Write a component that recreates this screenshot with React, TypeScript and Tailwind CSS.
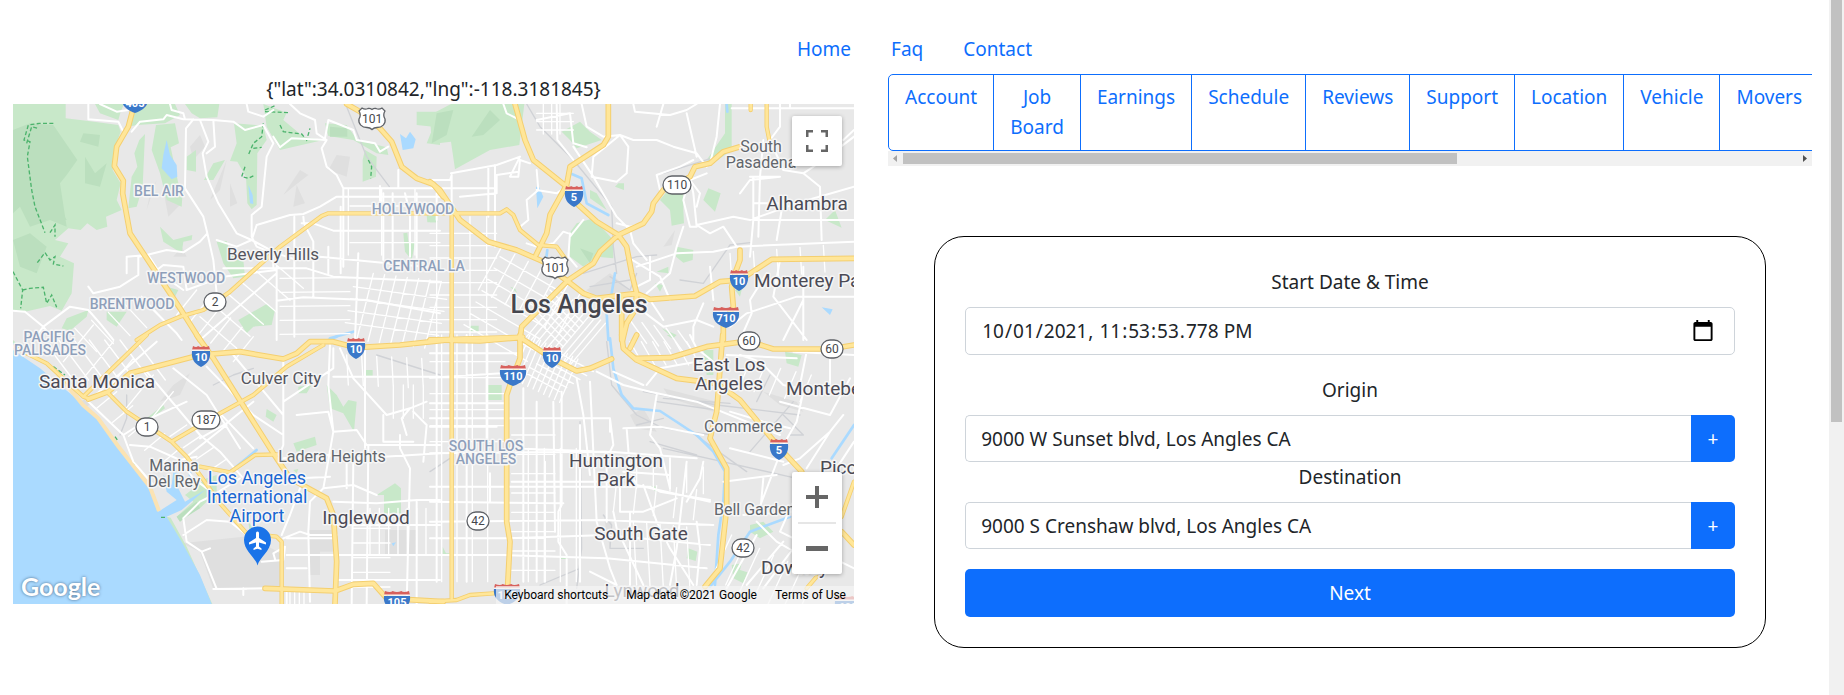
import { useState } from "react";
import type { ReactNode } from "react";

/* ---------- map geometry: four tiles, each drawn in its own 3x units ---------- */

/** n parallel strokes starting at (x, y), stepping by (sx, sy), each running along (lx, ly). */
function hatch(x: number, y: number, sx: number, sy: number, lx: number, ly: number, n: number): string {
  return Array.from({ length: n }, (_, i) => `M${x + sx * i},${y + sy * i}l${lx},${ly}`).join("");
}

interface Tile {
  at: string;
  ocean: string;
  shade: string;
  parks: string;
  deep: string;
  trails: string;
  lakes: string;
  rivers: string;
  rails: string;
  streets: string;
  fine: string;
  roads: string;
  freeways: string;
}

const tiles: Tile[] = [
  {
    at: "translate(0 60) scale(0.33333)",
    ocean: "",
    shade:
      "M850,405L900,330L925,345L880,380ZM985,330L1010,285L1050,290L1040,350ZM880,440L890,375L915,430ZM630,420L680,300L660,390ZM690,370L712,430L690,440ZM440,450L470,360L450,400ZM505,470L490,390L545,430ZM570,260L600,225L615,260L580,300ZM520,590L545,560L560,590Z",
    parks:
      "M39,132H197V175L265,183L355,195L362,215L345,262L338,330L362,370L350,420L365,450L318,470L322,500L290,510L262,490L242,510L205,505L165,540L205,550L180,590L222,610L215,700L185,752L150,738L75,755L39,752ZM265,132H285L300,160L355,180L362,155L372,132H350ZM385,200L405,132H525L540,165L495,190L410,195ZM418,240L435,222L428,380L410,440L385,445L395,350L412,320L403,280ZM468,195L525,190L537,250L512,262L535,370L548,395L545,440L500,420L480,340L455,270ZM555,132H658L652,172L600,175L575,160ZM702,190L790,197L800,240L772,280L770,435L755,448L742,430L738,350L712,305L690,303L710,250ZM790,132L860,158L850,180L910,230L970,240L840,270L800,200ZM975,190L1040,195L1072,240L1160,262L1165,285L1130,280L1060,240L985,228ZM1095,270L1130,290L1128,350L1088,365V300ZM1250,155H1320V255L1280,250L1300,200L1250,195ZM560,290L588,270V335L560,330ZM640,310L675,300L640,360L612,360ZM480,500L520,540L577,525L575,540L550,545L545,580L490,545ZM650,545L680,543L690,580L730,600L735,650L700,655L670,610ZM715,780L800,732L825,750L815,795L760,800L740,820ZM200,775L265,750L260,770L210,812L185,805ZM320,755L380,755L350,800L320,780ZM1210,520L1222,518L1225,545L1245,550L1235,600L1215,575ZM1280,465H1312V487H1282ZM500,680L535,690L520,720Z",
    deep:
      "M39,210L90,190L160,195L232,300L200,345L180,370L200,500L150,480L90,500L60,440L39,460ZM110,390L150,360L170,420L200,480L140,470ZM250,220L300,225L295,260L240,245ZM39,540L90,520L140,560L110,640L60,620ZM990,200L1042,205V230H990ZM255,290L285,340L320,310L300,380L255,370Z",
    trails:
      "M160,190H118L85,195L72,240L90,245L82,290L95,390L105,440L135,518M150,518L165,495V530M80,250L95,200L115,205M112,608L135,578L150,600L165,590L160,612L190,618M39,635L68,690L62,745M68,690L90,685L130,682L140,730L155,705L170,742M795,150L830,135M795,155L868,158M790,190L785,230L760,250L745,285M760,265L785,262M840,195L850,215L905,222L920,240L930,205M735,320L725,350L745,355L765,345M1105,300L1115,320L1112,355",
    lakes:
      "M500,240L510,285L530,315L532,350L515,358L485,325L490,285ZM745,375L758,405L760,432L750,430ZM1200,222L1218,235L1230,215L1247,238L1240,265L1208,270Z",
    rivers: "M990,835L1060,815",
    rails: "M1040,140L1100,290L1168,380",
    streets:
      "M265,132V178L355,185L370,215M300,132L350,155L385,150M395,215L420,185L490,178L500,165L550,178L640,180L700,185L735,210L790,195M510,132L515,150L550,160L555,178M580,178L558,205L555,385L610,470L622,520L600,545L550,577L500,570L440,585M600,180L625,245L608,280L620,350L655,430L710,520L755,540M640,180L645,260L620,280M740,132L745,155L790,170L820,150M790,195L820,250L800,290L785,440L755,465V530L770,560L820,580V620M870,132L900,160L945,180L950,220L980,240L965,265L980,320L1010,345L1030,385V620M820,230L840,262L875,235L980,240M975,235L985,180L1060,210L1070,240L1125,250L1140,275L1165,260M755,540L770,495L870,465L910,462L960,440L1010,410H1320M1030,385H1320M1195,330V385M1140,378V440M905,490H940L1000,512H1320M670,625H920L1000,650L1320,665M830,722L910,712L1100,720L1320,760M960,590L1320,625M910,470L912,490L940,545V712M75,755L130,800L210,740L265,750L300,790L340,840M265,680L280,700L360,680L415,645V590L445,585L480,640L550,690M622,520L640,600L650,700M560,690L670,650L830,630M830,620V840M883,470V830M1022,440V640M1075,580L1065,840M1150,400V600M1178,400V600M1215,400L1230,460V590M1250,400V600M1310,400V480M985,560V640M39,752L75,755M445,650L490,615L550,620L560,690M650,540L710,560L755,540L830,580L890,600L960,590M380,640V590L440,585M100,840L130,800L160,840M450,740L530,820L545,840M600,840L830,640",
    fine:
      hatch(590, 690, 34, 28, -60, 75, 6) +
      hatch(600, 770, 40, -36, 110, 95, 6) +
      hatch(225, 805, 50, -24, 65, 70, 5) +
      hatch(840, 655, 0, 42, 210, -2, 5) +
      hatch(1120, 640, 34, 4, -50, 200, 7) +
      hatch(1060, 680, -8, 36, 280, 38, 4) +
      hatch(1045, 385, 100, 0, 0, 200, 3) +
      hatch(1050, 438, 0, 110, 270, 0, 2),
    roads: "M645,727L690,695L840,560L965,468L985,460H1320M645,727L610,750L540,770L480,795L410,840",
    freeways:
      "M403,132L385,200L350,260L343,318L370,362L368,400L390,520L460,625L540,745L600,840M1040,132L1080,155L1140,205L1175,245L1205,320L1250,355L1300,373L1330,410",
  },
  {
    at: "translate(430 60) scale(0.33333)",
    ocean: "",
    shade: "M95,245L130,150L200,190L180,260L130,230ZM700,560L735,510L725,555ZM470,690L540,640L600,690L560,760ZM470,510L520,520L500,560Z",
    parks:
      "M0,165L63,132H283L268,255L180,270L75,328L63,245L5,252ZM395,215L450,185L480,215L515,240L440,265L420,240ZM690,420L710,395L760,400V450L762,490L725,497L720,450ZM820,420L835,385L872,400L855,455ZM740,560L790,570L788,600L760,608L738,590ZM440,490L490,475L550,540L550,595L500,590L460,620L420,590L418,520ZM680,635L715,620V640ZM885,132H905V270L850,310L830,300L885,220ZM555,380L565,370H582V390ZM1185,480L1215,450L1235,503ZM695,805L740,825L730,835ZM118,797H146V815H118ZM0,470H20V487H0ZM480,390L500,400L530,450L480,415ZM675,670L700,675L690,695ZM915,690H935L930,710ZM240,680L255,685L262,700Z",
    deep: "M20,160L70,150L50,225L5,250ZM125,230L180,150L210,180L160,225ZM450,565L490,580L480,610Z",
    trails: "",
    lakes: "M318,380L328,382L340,410L322,445ZM1175,742L1208,748L1200,765Z",
    rivers: "M420,340L455,355L470,430L535,465M555,640L545,700L530,760L535,840M348,600L352,570M890,132L892,155",
    rails:
      "M290,132L330,200L430,300L545,440L550,560L560,640M460,640L620,590L680,585M540,650L600,690L620,640M750,660L820,670L900,555L960,548M480,680L600,660M700,340L860,290",
    streets:
      "M220,132L230,160L270,180M63,340L200,315L270,290M0,360H60L65,345M175,320V470M195,315V560M30,385H190M65,345V460M90,410L200,400V345L265,335M270,290L240,350L265,350L270,300L300,310M320,330L325,390L290,420L295,480L270,500M410,380L380,400L320,390M320,180L420,160L430,250L470,262M380,132L382,240L430,300M455,132L470,200L520,230L570,225L610,240L680,240L730,260L800,280L830,320M610,132L615,155L720,165L770,150L800,132M570,225L490,290L485,350L560,365L590,340L595,260L570,225M770,160L800,290M700,132L680,200M870,132L860,230L840,310M430,260L490,350L560,470L600,510L610,550L650,600M640,490L600,500L560,490M690,390L680,345L750,320L790,300M780,350L760,420L780,500H800L790,400L780,355M800,495L910,470L960,480L1100,430L1272,380M760,500L740,560L720,640L650,700M800,495L840,520L880,500L920,560M620,620L740,580L850,575L920,560L1272,545M830,340L780,360L810,400L800,440M970,350V480L960,590M1000,240L990,350L985,530M1050,132V200L1020,240L1060,330L1120,340L1170,380L1175,540M1060,420L1040,540M970,480H1272M960,350H1050M970,430H1060M1272,210L1240,240M930,400L960,360L1050,350M905,145H1272M1080,132V145M1120,340L1180,300L1272,230M415,520L400,515L370,550L320,560L290,550M420,520L415,590L440,620M460,480L420,530M1010,640L960,720L965,760L930,840M1120,620V840M1050,600L1030,710L1130,840M820,730L790,800V840M620,740L700,800L800,780L850,800M660,720L700,780M660,590V660L620,680M590,590L690,650L720,720M850,720L840,620M900,800L950,760L1100,710H1272M1060,840L1090,780L1120,720",
    fine:
      hatch(20, 470, 50, 0, 0, 360, 4) +
      hatch(0, 520, 0, 37, 200, 0, 9) +
      hatch(215, 560, 40, 22, -70, 130, 7) +
      hatch(210, 590, -18, 34, 190, 110, 7) +
      hatch(400, 700, 14, 10, -110, 130, 10) +
      hatch(300, 760, 12, -14, 100, 100, 6) +
      hatch(340, 132, 25, 0, 0, 90, 3) +
      hatch(320, 160, 0, 25, 110, 0, 3) +
      hatch(600, 780, 36, 8, 50, 70, 5) +
      hatch(900, 580, 70, -6, 5, 80, 5),
    roads:
      "M0,460H210L230,448L250,465L270,510L325,555L380,560L405,595M65,460V840M1010,132V200L1018,240M962,132V150M0,838L280,830",
    freeways:
      "M255,132L285,240L310,300L410,380L440,430L500,485L565,525L590,560L605,640L620,700L615,750L590,790L578,840M535,132V230L520,255L420,320L410,375L360,465L350,520L318,585M0,365L30,390L90,480L175,545L260,570L340,605L380,640L415,665L460,700L500,715M270,840L275,800L350,725L415,660L490,610L510,575L565,525L640,490L665,455L670,430L700,390L740,375L780,350L795,320L840,310L880,275L930,260M500,715L620,700L660,718L795,708L870,665L930,660L1025,598L1272,595M930,570V600L915,640L905,680L910,740L880,790V840M575,715V840",
  },
  {
    at: "translate(0 335) scale(0.33333)",
    ocean:
      "M39,45L120,100L240,200L290,245L350,330L450,455L475,530L530,495L500,470L490,420L515,450L520,410L550,420L530,450L555,500L615,465L545,525L500,545L545,620L600,720L635,807H39Z",
    shade: "M545,625L730,605L780,620L850,660V755L640,762L600,650ZM480,200L520,150L570,115L540,180ZM925,585H1000V650H960V720H925ZM240,200L260,190L275,205L260,215ZM1155,585H1250V660H1155Z",
    parks:
      "M440,250L490,210L495,220L450,255ZM800,222L830,240L820,260L797,245ZM980,150L1010,180L1030,215L1045,195L1070,200L1062,290L1030,235L990,220ZM880,325L945,305L950,330L890,350ZM895,155L935,150L920,175L895,175ZM1130,480L1185,445L1203,460V535H1152V480ZM1095,105H1118V122H1095ZM745,560L757,575L750,600ZM880,405L895,402L890,415ZM500,545L512,548L560,635L637,807H620L580,715L540,630ZM39,15L60,35L60,45L39,40ZM555,480L620,430L650,420L650,470L600,520L570,520L540,560L530,545L580,500Z",
    deep: "M530,545L590,500L600,520L560,545L540,560Z",
    trails: "M160,95L195,120M345,305L352,315M400,380L412,395M483,547H495",
    lakes: "M1175,625L1188,622L1180,634Z",
    rivers: "M690,410L770,345M985,15L1010,5M570,400V430",
    rails: "M380,180V250L360,300M640,150L700,120L760,100M1130,60L1320,120",
    streets:
      "M260,195L370,300L400,380L460,450M275,190L470,20M370,300L440,255L560,200M440,110L600,300L660,350L730,430M520,100L620,180L720,340M390,330L450,335L540,375L590,365M620,95L760,240L850,300M700,60L850,240M560,365L680,270M600,310L680,265L760,200M660,235L760,340M850,70V330L840,355M850,200L1000,100V40M990,30L985,150L1000,290L970,460L930,500L925,590L930,800M850,370L980,360L1080,370L1320,355M1060,380L1055,807M1000,125H1320M1095,40V340M890,240L985,230L1000,290L1070,285L1100,330H1320M1020,40L1060,130L1160,240L1230,220L1280,200M1000,500L1130,505L1250,495H1320M1010,570H1320M1105,330L1100,807M1200,300V340L1230,400L1220,807M1240,230L1280,270L1270,380M860,610H1000M860,660H1320M860,700H920M1010,735H1320M740,600L690,560L620,555L550,600M550,550L600,500L640,480L720,430M550,550L560,620L605,650L650,762M605,650L630,640M640,762L795,760M650,762H740M785,680L850,675L855,635L820,655L825,672M850,610L900,590L930,600L1010,600M860,807V770M900,460L870,540L845,600M1150,240V320H1240M1230,220L1205,250L1220,300M1040,460V370M540,375L580,430L620,460M970,460L1060,450L1130,480M900,430L990,425M1250,500V807M730,780V760",
    fine:
      hatch(130, 15, 46, 0, 90, 120, 7) +
      hatch(190, 80, 60, 50, 90, -110, 5) +
      hatch(290, 220, 48, 42, 60, -50, 5) +
      hatch(1110, 520, 28, 0, 0, 140, 7) +
      hatch(1060, 580, 0, 44, 110, 0, 5) +
      hatch(1040, 60, 45, 2, 5, 90, 6) +
      hatch(1180, 150, 30, 0, 0, 100, 4) +
      hatch(870, 770, 14, 0, 0, 37, 4) +
      hatch(560, 270, 40, 34, -50, 34, 4),
    roads:
      "M39,35L140,85L250,185L265,190M250,185L440,0M325,175L380,230L515,320L560,365L600,420L660,505L740,595L830,605L845,620V807M515,320L660,235L760,180L860,95L970,30M600,395L690,412L765,360L840,358",
    freeways:
      "M265,192L325,170L390,115L600,60L720,50L850,72L890,55L930,20L1000,20L1070,38L1200,30L1330,16M590,0L640,70L820,355L870,430L980,490L1000,540L1010,680L1005,807M795,760L1005,768L1060,748L1120,745L1160,790L1330,800",
  },
  {
    at: "translate(430 335) scale(0.33333)",
    ocean: "",
    shade: "M600,240L640,220L680,290L620,280ZM700,160L860,200L850,230L720,190ZM520,540L545,560L540,640ZM1000,170L1100,200L1120,230L1050,210Z",
    parks:
      "M170,150H215V195H170ZM1065,50L1115,60L1105,95L1070,85ZM820,45H850V120H830ZM655,452L680,455V472ZM775,640L802,650L797,678L770,670ZM960,570L1000,560L1030,590L990,610L960,590ZM905,690L935,685L930,705L952,712L940,745L910,730ZM390,663H413V672H390ZM38,635L48,655H58V660H38ZM710,0H735L725,10Z",
    deep: "",
    trails: "",
    lakes: "",
    rivers:
      "M540,10L550,100L575,180L610,220L690,228L800,300L850,350L885,410L880,500L865,600L855,750M840,755L900,680L960,590L1080,545M1205,370L1272,270",
    rails:
      "M530,20L545,150L620,240L700,280L850,300M640,170L860,210L1110,240M680,200L860,225M700,190L900,205M450,260L455,640L440,760M440,380H500M520,540L545,570L540,640L640,640M700,340L1100,430M740,260L950,410M960,350L1090,200M980,200L1020,120M660,320L800,360M620,270L700,250M0,410L60,370M450,700L330,750M1060,240L1120,300L1080,300",
    streets:
      "M0,55H270M0,128L215,115M0,205H230M0,250H540V290M0,275H200M0,355L540,350L800,370M0,455H660L690,470L840,495M0,500L400,505M0,560L520,555L850,570M0,610H230L530,600L840,630M0,660H220L530,670L830,700M245,440H540M240,340L530,350M500,110L580,150L660,170L800,200L1050,300M480,140L500,560L540,700L560,750M395,170V510L385,530V620L410,660V807M440,130L460,240L480,420M280,160V740M320,200V740M345,380V740M370,200L375,590M450,270V740M170,0V340M180,415V500M110,0V740M20,20V740M540,250L550,330L540,350M590,280L600,410L620,450L840,500M580,280L690,275L820,300M570,450V530H640L740,490M530,350V560M640,450L680,560L720,640L790,750M550,530L560,580L640,750M600,530V750M720,370V460M770,380L740,640L720,750M820,380L810,430L770,500M800,560L810,640L800,750M580,410L720,420M680,180L660,300L690,340L720,460M880,440L1040,420M980,540L1060,330M1090,500L1050,590L1272,700M980,560L1040,620L1110,660M940,540L1090,530M890,760L980,600M950,750L1060,620M1000,760L1120,600M1120,170L1100,260L1060,330M930,60L990,80L1060,150L1105,160M890,60L1100,70M1090,50L1272,60M1130,50L1110,150M1200,60V160M1050,200L1200,240L1260,130M1060,390L1110,370L1200,290L1240,240M1180,460L1272,320M1130,400L1200,290M480,710L560,750M650,150L690,100L800,80M780,0L800,40L850,80M550,110L640,150M900,340L1060,380M900,230L1000,260L1080,280M1000,430L990,540",
    fine:
      hatch(0, 80, 0, 48, 225, 0, 6) +
      hatch(35, 0, 46, 0, 0, 740, 4) +
      hatch(245, 300, 0, 58, 130, 0, 8) +
      hatch(295, 340, 48, 0, 0, 400, 4) +
      hatch(300, 0, 16, 8, -55, 130, 10) +
      hatch(280, 110, 20, -12, 110, 60, 6) +
      hatch(560, 440, 60, 6, -10, 90, 5) +
      hatch(610, 560, 40, 4, 10, 190, 5) +
      hatch(600, 20, 34, 0, 40, 70, 6) +
      hatch(905, 600, 42, 20, -60, 130, 7) +
      hatch(620, 380, 50, 4, 0, 80, 5) +
      hatch(960, 80, 46, 10, -34, 80, 5),
    roads: "M65,0V790M0,800L80,795L120,780L190,775M1272,440L1235,545M1160,725L1130,760",
    freeways:
      "M270,0V70L240,150L230,180V560L240,620L232,770M0,15L150,18L270,8L290,20L365,70L440,108L480,100L545,72M575,0L580,40L620,75L740,130L860,145L930,195L1000,280L1050,340L1115,410M1235,590L1272,630M878,0L860,230L840,310L890,400V520L870,700L825,755M620,70L720,68L830,35L955,18L1030,42H1200L1272,30M620,0L600,40",
  },
];

type TileLayer = Exclude<keyof Tile, "at">;

function Layer({ name, className, width }: { name: TileLayer; className: string; width?: number }) {
  return (
    <g className={className} strokeWidth={width} strokeLinejoin="round" strokeLinecap="round">
      {tiles.map((tile) => (tile[name] ? <path key={tile.at} d={tile[name]} transform={tile.at} /> : null))}
    </g>
  );
}

/* ---------- map labels and route markers ---------- */

type Tone = "district" | "minor" | "town" | "city" | "place" | "airport";

const toneClass: Record<Tone, string> = {
  district: "fill-[#8e9fba] text-[14px] font-medium",
  minor: "fill-[#62666c] text-[16px]",
  place: "fill-[#54555e] text-[17px]",
  town: "fill-[#4b4a55] text-[19px]",
  city: "fill-[#45464e] text-[25px] font-medium",
  airport: "fill-[#1967d2] text-[18px]",
};

const labels: { text: string; x: number; y: number; tone: Tone; start?: boolean }[] = [
  { text: "BEL AIR", x: 159, y: 196, tone: "district" },
  { text: "HOLLYWOOD", x: 413, y: 214, tone: "district" },
  { text: "CENTRAL LA", x: 424, y: 271, tone: "district" },
  { text: "WESTWOOD", x: 186, y: 283, tone: "district" },
  { text: "BRENTWOOD", x: 132, y: 309, tone: "district" },
  { text: "PACIFIC", x: 49, y: 342, tone: "district" },
  { text: "PALISADES", x: 50, y: 355, tone: "district" },
  { text: "SOUTH LOS", x: 486, y: 451, tone: "district" },
  { text: "ANGELES", x: 486, y: 464, tone: "district" },
  { text: "Beverly Hills", x: 273, y: 260, tone: "place" },
  { text: "Culver City", x: 281, y: 384, tone: "place" },
  { text: "Santa Monica", x: 97, y: 388, tone: "town" },
  { text: "Marina", x: 174, y: 471, tone: "minor" },
  { text: "Del Rey", x: 174, y: 487, tone: "minor" },
  { text: "Ladera Heights", x: 332, y: 462, tone: "minor" },
  { text: "Los Angeles", x: 257, y: 484, tone: "airport" },
  { text: "International", x: 257, y: 503, tone: "airport" },
  { text: "Airport", x: 257, y: 522, tone: "airport" },
  { text: "Inglewood", x: 366, y: 524, tone: "town" },
  { text: "South", x: 761, y: 152, tone: "minor" },
  { text: "Pasadena", x: 761, y: 168, tone: "minor" },
  { text: "Alhambra", x: 807, y: 210, tone: "town" },
  { text: "Los Angeles", x: 579, y: 313, tone: "city" },
  { text: "Monterey Park", x: 754, y: 287, tone: "town", start: true },
  { text: "East Los", x: 729, y: 371, tone: "town" },
  { text: "Angeles", x: 729, y: 390, tone: "town" },
  { text: "Montebello", x: 786, y: 395, tone: "town", start: true },
  { text: "Commerce", x: 743, y: 432, tone: "minor" },
  { text: "Huntington", x: 616, y: 467, tone: "town" },
  { text: "Park", x: 616, y: 486, tone: "town" },
  { text: "South Gate", x: 641, y: 540, tone: "town" },
  { text: "Pico Rivera", x: 820, y: 474, tone: "town", start: true },
  { text: "Bell Gardens", x: 714, y: 515, tone: "minor", start: true },
  { text: "Downey", x: 761, y: 574, tone: "town", start: true },
  { text: "Lynwood", x: 642, y: 597, tone: "town" },
];

const interstates = [
  { id: "405", x: 135, y: 102 },
  { id: "5", x: 574, y: 196 },
  { id: "10", x: 739, y: 280 },
  { id: "710", x: 726, y: 317 },
  { id: "10", x: 201, y: 356 },
  { id: "10", x: 356, y: 348 },
  { id: "10", x: 552, y: 357 },
  { id: "110", x: 513, y: 375 },
  { id: "5", x: 779, y: 449 },
  { id: "105", x: 397, y: 601 },
  { id: "105", x: 507, y: 594 },
  { id: "605", x: 848, y: 606 },
];

const stateRoutes = [
  { id: "2", x: 215, y: 302 },
  { id: "110", x: 677, y: 185 },
  { id: "1", x: 147, y: 427 },
  { id: "187", x: 206, y: 420 },
  { id: "42", x: 478, y: 521 },
  { id: "42", x: 743, y: 548 },
  { id: "60", x: 749, y: 341 },
  { id: "60", x: 832, y: 349 },
];

const usRoutes = [
  { id: "101", x: 372, y: 119 },
  { id: "101", x: 555, y: 268 },
];

function InterstateShield({ id, x, y }: { id: string; x: number; y: number }) {
  const w = id.length > 2 ? 13 : 9;
  return (
    <g transform={`translate(${x} ${y})`}>
      <path
        d={`M${-w},-5C${-w - 1},3 ${-w * 0.7},8 0,11C${w * 0.7},8 ${w + 1},3 ${w},-5Z`}
        className="fill-[#3a78c9]"
      />
      <path
        d={`M${-w},-6L${-w + 1},-10Q${-w / 2},-8 ${-w / 3},-10Q0,-8 ${w / 3},-10Q${w / 2},-8 ${w - 1},-10L${w},-6Z`}
        className="fill-[#d7605c]"
      />
      <path d={`M${-w},-6H${w}`} className="stroke-white" />
      <text y="5" textAnchor="middle" className="fill-white text-[11px] font-bold">
        {id}
      </text>
    </g>
  );
}

function StateShield({ id, x, y }: { id: string; x: number; y: number }) {
  const w = id.length > 2 ? 14 : 11;
  return (
    <g transform={`translate(${x} ${y})`}>
      <rect x={-w} y={-9} width={w * 2} height={18} rx={9} className="fill-white stroke-[#5f6267]" strokeWidth="1.3" />
      <text y="4" textAnchor="middle" className="fill-[#45474b] text-[12px]">
        {id}
      </text>
    </g>
  );
}

function UsShield({ id, x, y }: { id: string; x: number; y: number }) {
  return (
    <g transform={`translate(${x} ${y})`}>
      <path
        d="M-10,-11Q-7,-9 -4,-10.500Q-2,-11 0,-9.500Q2,-11 4,-10.500Q7,-9 10,-11L13,-8Q10.500,-4 13,0C14,5 10,8.500 5,8.500Q2,8.500 0,10.500Q-2,8.500 -5,8.500C-10,8.500 -14,5 -13,0Q-10.500,-4 -13,-8Z"
        className="fill-white stroke-[#5f6267]"
        strokeWidth="1.3"
      />
      <text y="4" textAnchor="middle" className="fill-[#45474b] text-[12px]">
        {id}
      </text>
    </g>
  );
}

function MapCanvas() {
  return (
    <svg
      viewBox="13 104 841 500"
      preserveAspectRatio="xMidYMid slice"
      className="block h-full w-full bg-[#e8e8e8] font-[Roboto,sans-serif]"
      role="img"
      aria-label="Map"
    >
      <Layer name="shade" className="fill-[#dfdfdf]" />
      <Layer name="parks" className="fill-[#c8e8c9]" />
      <Layer name="deep" className="fill-[#bbdfbe]" />
      <Layer name="ocean" className="fill-[#aadaff]" />
      <path
        d="M53,368L83,405L98,418L118,446L150,487L159,511"
        className="fill-none stroke-[#fbe3b3]"
        strokeWidth="4"
      />
      <Layer name="lakes" className="fill-[#aadaff]" />
      <Layer name="rails" className="fill-none stroke-[#d0d2d6]" width={4} />
      <Layer name="rivers" className="fill-none stroke-[#aadaff]" width={8} />
      <g className="fill-none stroke-[#4cb36c]" strokeWidth="4" strokeDasharray="12 7">
        {tiles.map((tile) => (
          <path key={tile.at} d={tile.trails} transform={tile.at} />
        ))}
      </g>
      <Layer name="fine" className="fill-none stroke-white" width={4} />
      <Layer name="streets" className="fill-none stroke-white" width={6} />
      <Layer name="roads" className="fill-none stroke-[#f4cf70]" width={13} />
      <Layer name="freeways" className="fill-none stroke-[#f4cf70]" width={17} />
      <Layer name="roads" className="fill-none stroke-[#ffe699]" width={8} />
      <Layer name="freeways" className="fill-none stroke-[#ffe699]" width={11} />

      {labels.map((label) => (
        <text
          key={`${label.text}-${label.y}`}
          x={label.x}
          y={label.y}
          textAnchor={label.start ? "start" : "middle"}
          paintOrder="stroke"
          strokeLinejoin="round"
          strokeWidth="3"
          className={`stroke-[#f6f6f6] ${toneClass[label.tone]}`}
        >
          {label.text}
        </text>
      ))}

      {interstates.map((r) => (
        <InterstateShield key={`${r.id}-${r.x}`} {...r} />
      ))}
      {stateRoutes.map((r) => (
        <StateShield key={`${r.id}-${r.x}`} {...r} />
      ))}
      {usRoutes.map((r) => (
        <UsShield key={`${r.id}-${r.x}`} {...r} />
      ))}

      <path
        d="M257.500,565.500C256,558 244,551 244,540A13.500,13.500 0 0 1 271,540C271,551 259,558 257.500,565.500Z"
        className="fill-[#1a73e8]"
      />
      <path
        d="M257.500,531.500c-1,0 -1.500,.8 -1.500,2v4.500l-7,4.500v2l7,-2v4l-2.500,2v1.500l4,-1.200l4,1.200v-1.500l-2.500,-2v-4l7,2v-2l-7,-4.500v-4.500c0,-1.200 -.5,-2 -1.500,-2z"
        className="fill-white"
      />
    </svg>
  );
}

function MapPanel() {
  return (
    <div className="relative h-[500px] overflow-hidden">
      <MapCanvas />

      <button
        type="button"
        aria-label="Toggle fullscreen view"
        className="absolute top-3 right-3 flex size-[50px] items-center justify-center rounded-xs bg-white shadow-[0_1px_4px_rgba(0,0,0,0.3)]"
      >
        <svg viewBox="0 0 22 22" className="size-[22px] fill-[#666]">
          <path d="M0,0H7V2.500H2.500V7H0ZM15,0H22V7H19.500V2.500H15ZM0,15H2.500V19.500H7V22H0ZM19.500,15H22V22H15V19.500H19.500Z" />
        </svg>
      </button>

      <div className="absolute right-3 bottom-[30px] flex w-[50px] flex-col items-stretch rounded-xs bg-white shadow-[0_1px_4px_rgba(0,0,0,0.3)]">
        <button type="button" aria-label="Zoom in" className="flex h-[50px] items-center justify-center">
          <svg viewBox="0 0 22 22" className="size-[22px] fill-[#666]">
            <path d="M9,0H13V9H22V13H13V22H9V13H0V9H9Z" />
          </svg>
        </button>
        <div className="mx-1.5 h-0.5 bg-[#e6e6e6]" />
        <button type="button" aria-label="Zoom out" className="flex h-[50px] items-center justify-center">
          <svg viewBox="0 0 22 22" className="size-[22px] fill-[#666]">
            <path d="M0,8H22V13H0Z" />
          </svg>
        </button>
      </div>

      <div className="absolute bottom-0 left-2 font-[Lato,sans-serif] text-[25px] leading-[36px] font-bold text-white [text-shadow:0_0_3px_rgba(60,90,120,0.9)]">
        Google
      </div>

      <div className="absolute right-0 bottom-0 flex h-[18px] items-center gap-[18px] bg-[#f5f5f5]/70 px-2 font-[Roboto,sans-serif] text-[12px] leading-[18px] text-black">
        <button type="button">Keyboard shortcuts</button>
        <span>Map data ©2021 Google</span>
        <a href="#terms">Terms of Use</a>
      </div>
    </div>
  );
}

/* ---------- right-hand column ---------- */

const tabs = ["Account", "Job Board", "Earnings", "Schedule", "Reviews", "Support", "Location", "Vehicle", "Movers"];

function TabStrip() {
  return (
    <div>
      <div className="flex overflow-hidden">
        {tabs.map((tab) => (
          <button
            key={tab}
            type="button"
            className="-ml-px flex w-min shrink-0 items-start justify-center border border-[#0d6efd] px-4 pt-[7px] pb-2 text-center text-[#0d6efd] first:ml-0 first:rounded-l-[5px]"
          >
            {tab}
          </button>
        ))}
      </div>
      <div className="flex h-[15px] items-center justify-between bg-[#f1f1f1]" aria-hidden="true">
        <svg viewBox="0 0 15 15" className="size-[15px] fill-[#a3a3a3]">
          <path d="M9,4V11L5,7.500Z" />
        </svg>
        <div className="h-[11px] flex-1">
          <div className="h-full w-[62%] bg-[#c1c1c1]" />
        </div>
        <svg viewBox="0 0 15 15" className="size-[15px] fill-[#505050]">
          <path d="M6,4V11L10,7.500Z" />
        </svg>
      </div>
    </div>
  );
}

function Field({ id, label, children }: { id: string; label: string; children: ReactNode }) {
  return (
    <div className="flex flex-col gap-2.5">
      <label htmlFor={id} className="text-center">
        {label}
      </label>
      {children}
    </div>
  );
}

function AddressField({ id, label, initial }: { id: string; label: string; initial: string }) {
  const [value, setValue] = useState(initial);
  return (
    <Field id={id} label={label}>
      <div className="flex">
        <input
          id={id}
          type="text"
          value={value}
          onChange={(e) => setValue(e.target.value)}
          className="h-[47px] min-w-0 flex-1 rounded-l-[5px] border border-r-0 border-[#ced4da] bg-white px-[15px]"
        />
        <button type="button" aria-label={`Add ${label}`} className="w-11 rounded-r-[5px] bg-[#0d6efd] text-white">
          +
        </button>
      </div>
    </Field>
  );
}

function JobForm() {
  const [start, setStart] = useState("2021-10-01T23:53:53.778");
  return (
    <form
      onSubmit={(e) => e.preventDefault()}
      className="mx-[5%] mt-[70px] flex flex-col rounded-[30px] border border-black p-[30px]"
    >
      <Field id="start" label="Start Date & Time">
        <input
          id="start"
          type="datetime-local"
          step="0.001"
          value={start}
          onChange={(e) => setStart(e.target.value)}
          className="mb-5 h-12 w-full rounded-[5px] border border-[#ced4da] bg-white px-[15px] [&::-webkit-calendar-picker-indicator]:size-6 [&::-webkit-calendar-picker-indicator]:p-0 [&::-webkit-calendar-picker-indicator]:mr-1"
        />
      </Field>
      <AddressField id="origin" label="Origin" initial="9000 W Sunset blvd, Los Angles CA" />
      <AddressField id="destination" label="Destination" initial="9000 S Crenshaw blvd, Los Angles CA" />
      <button type="submit" className="mt-5 h-12 rounded-[5px] bg-[#0d6efd] text-white">
        Next
      </button>
    </form>
  );
}

export default function App() {
  return (
    <div className="flex min-h-screen bg-white font-['Noto_Sans',sans-serif] text-[19px] leading-[30px] text-[#212529]">
      <div className="min-w-0 flex-1">
        <nav className="flex justify-center gap-10 pt-[34px] pb-2.5 text-[#0d6efd]">
          <a href="#home">Home</a>
          <a href="#faq">Faq</a>
          <a href="#contact">Contact</a>
        </nav>
        <main className="grid grid-cols-[841fr_924fr] gap-[34px] pr-[17px] pl-[13px]">
          <section className="min-w-0">
            <p className="text-center">{'{"lat":34.0310842,"lng":-118.3181845}'}</p>
            <MapPanel />
          </section>
          <section className="min-w-0">
            <TabStrip />
            <JobForm />
          </section>
        </main>
      </div>
      <div className="flex w-[15px] shrink-0 flex-col bg-[#f1f1f1] px-0.5" aria-hidden="true">
        <div className="h-[422px] bg-[#c1c1c1]" />
      </div>
    </div>
  );
}
